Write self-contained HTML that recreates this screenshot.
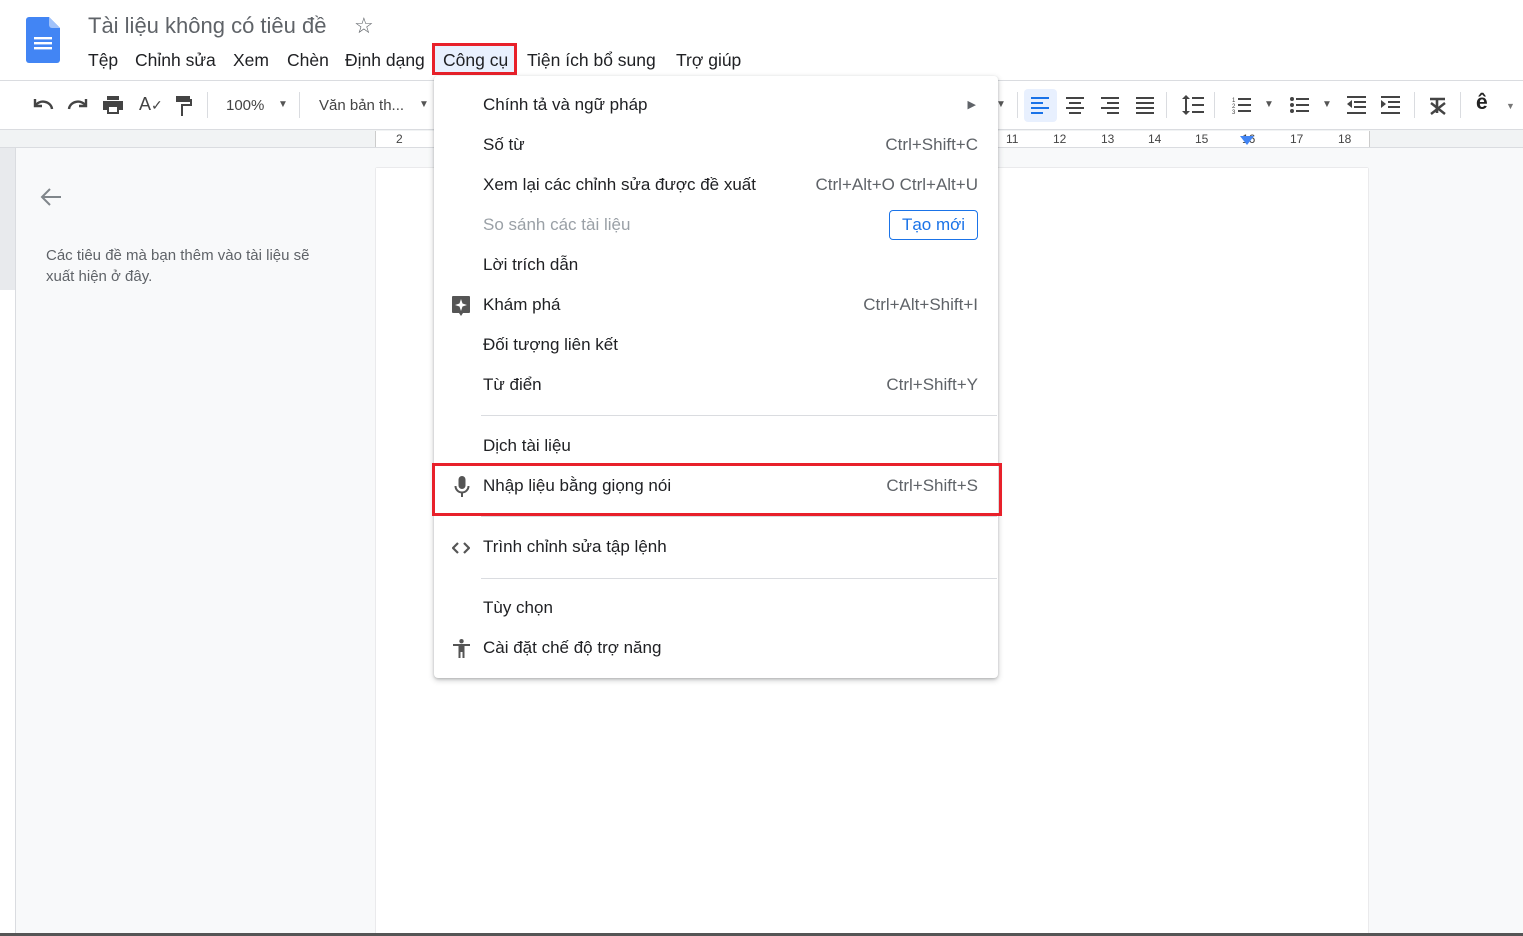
<!DOCTYPE html>
<html><head><meta charset="utf-8"><style>
*{margin:0;padding:0;box-sizing:border-box}
body{width:1523px;height:936px;overflow:hidden;background:#f8f9fa;font-family:"Liberation Sans",Arial,sans-serif;position:relative;color:#202124}
.a{position:absolute}
.hdr{left:0;top:0;width:1523px;height:81px;background:#fff;border-bottom:1px solid #dadce0}
.tb{left:0;top:81px;width:1523px;height:49px;background:#fff;border-bottom:1px solid #dadce0}
.ruler{left:0;top:130px;width:1523px;height:18px;background:#f1f3f4;border-bottom:1px solid #dadce0}
.mi{position:absolute;left:0;width:564px;height:40px;font-size:17px;line-height:40px}
.mi .t{position:absolute;left:49px}
.mi .s{position:absolute;right:20px;color:#5f6368}
.sep{position:absolute;left:47px;width:516px;height:1px;background:#dadce0}
.menu{left:434px;top:76px;width:564px;height:602px;background:#fff;border-radius:4px;box-shadow:0 2px 6px rgba(60,64,67,.3),0 1px 2px rgba(60,64,67,.2)}
.mn{position:absolute;top:50px;font-size:17.5px}
.ic{position:absolute;fill:#444}
.rn{position:absolute;top:132px;font-size:12px;color:#444}
</style></head><body>
<div class="a hdr"></div>
<svg class="a" style="left:26px;top:17px" width="34" height="46" viewBox="0 0 34 46"><path d="M3 0h20l11 11v32a3 3 0 0 1-3 3H3a3 3 0 0 1-3-3V3a3 3 0 0 1 3-3z" fill="#4285f4"/><path d="M23 0l11 11H26a3 3 0 0 1-3-3z" fill="#a1c2fa"/><rect x="8" y="20" width="18" height="2.4" fill="#fff"/><rect x="8" y="25" width="18" height="2.4" fill="#fff"/><rect x="8" y="30" width="18" height="2.4" fill="#fff"/></svg>
<div class="a" style="left:88px;top:13px;font-size:22px;color:#5f6368">Tài liệu không có tiêu đề</div>
<div class="a" style="left:354px;top:13px;font-size:22px;color:#5f6368">☆</div>
<div class="mn" style="left:88px">Tệp</div>
<div class="mn" style="left:135px">Chỉnh sửa</div>
<div class="mn" style="left:233px">Xem</div>
<div class="mn" style="left:287px">Chèn</div>
<div class="mn" style="left:345px">Định dạng</div>
<div class="a" style="left:432px;top:43px;width:85px;height:32px;border:3px solid #e8202a;background:#e8f0fe"></div>
<div class="mn" style="left:443px">Công cụ</div>
<div class="mn" style="left:527px">Tiện ích bổ sung</div>
<div class="mn" style="left:676px">Trợ giúp</div>

<div class="a tb"></div>
<svg class="a" style="left:32px;top:97px" width="22" height="14"><path d="M3 2v7h7" stroke="#444" stroke-width="2.4" fill="none"/><path d="M3 9a9 8 0 0 1 17 3" stroke="#444" stroke-width="2.4" fill="none"/></svg>
<svg class="a" style="left:67px;top:97px" width="22" height="14"><path d="M19 2v7h-7" stroke="#444" stroke-width="2.4" fill="none"/><path d="M19 9a9 8 0 0 0-17 3" stroke="#444" stroke-width="2.4" fill="none"/></svg>
<svg class="a ic" style="left:103px;top:96px" width="20" height="18"><path d="M4 0h12v4H4zM0 5h20v9h-4v4H4v-4H0z"/><rect x="6" y="11" width="8" height="5" fill="#fff"/></svg>
<div class="a" style="left:139px;top:94px;font-size:18px;color:#444">A<span style="font-size:14px">✓</span></div>
<svg class="a ic" style="left:176px;top:96px" width="16" height="20"><path d="M0 0h14v3h2v7H7v10H5V8h9V5h-0v1H0z"/></svg>
<div class="a" style="left:207px;top:92px;width:1px;height:26px;background:#dadce0"></div>
<div class="a" style="left:226px;top:97px;font-size:15px;color:#444">100%</div>
<div class="a" style="left:278px;top:99px;font-size:10px;color:#555">▼</div>
<div class="a" style="left:299px;top:92px;width:1px;height:26px;background:#dadce0"></div>
<div class="a" style="left:319px;top:97px;font-size:15px;color:#444">Văn bản th...</div>
<div class="a" style="left:419px;top:99px;font-size:10px;color:#555">▼</div>
<div class="a" style="left:996px;top:99px;font-size:10px;color:#555">▼</div>
<div class="a" style="left:1017px;top:92px;width:1px;height:26px;background:#dadce0"></div>
<div class="a" style="left:1024px;top:89px;width:33px;height:33px;background:#e8f0fe;border-radius:4px"></div>
<svg class="a" style="left:1031px;top:97px" width="18" height="17"><path d="M0 0h18v2H0zM0 5h12v2H0zM0 10h18v2H0zM0 15h12v2H0z" fill="#1a73e8"/></svg>
<svg class="a ic" style="left:1066px;top:97px" width="18" height="17"><path d="M0 0h18v2H0zM3 5h12v2H3zM0 10h18v2H0zM3 15h12v2H3z"/></svg>
<svg class="a ic" style="left:1101px;top:97px" width="18" height="17"><path d="M0 0h18v2H0zM6 5h12v2H6zM0 10h18v2H0zM6 15h12v2H6z"/></svg>
<svg class="a ic" style="left:1136px;top:97px" width="18" height="17"><path d="M0 0h18v2H0zM0 5h18v2H0zM0 10h18v2H0zM0 15h18v2H0z"/></svg>
<div class="a" style="left:1166px;top:92px;width:1px;height:26px;background:#dadce0"></div>
<svg class="a ic" style="left:1182px;top:95px" width="22" height="20"><path d="M4 0l4 4H5v12h3l-4 4-4-4h3V4H0zM10 2h12v2H10zM10 9h12v2H10zM10 16h12v2H10z"/></svg>
<div class="a" style="left:1214px;top:92px;width:1px;height:26px;background:#dadce0"></div>
<svg class="a ic" style="left:1232px;top:96px" width="20" height="18"><text x="0" y="6" font-size="6">1</text><text x="0" y="12" font-size="6">2</text><text x="0" y="18" font-size="6">3</text><path d="M6 2h13v2H6zM6 8h13v2H6zM6 14h13v2H6z"/></svg>
<div class="a" style="left:1264px;top:99px;font-size:10px;color:#555">▼</div>
<svg class="a ic" style="left:1290px;top:96px" width="20" height="18"><circle cx="2" cy="3" r="2"/><circle cx="2" cy="9" r="2"/><circle cx="2" cy="15" r="2"/><path d="M6 2h13v2H6zM6 8h13v2H6zM6 14h13v2H6z"/></svg>
<div class="a" style="left:1322px;top:99px;font-size:10px;color:#555">▼</div>
<svg class="a ic" style="left:1347px;top:96px" width="19" height="18"><path d="M0 0h19v2H0zM7 5h12v2H7zM7 10h12v2H7zM0 16h19v2H0zM5 4v8L0 8z"/></svg>
<svg class="a ic" style="left:1381px;top:96px" width="19" height="18"><path d="M0 0h19v2H0zM7 5h12v2H7zM7 10h12v2H7zM0 16h19v2H0zM0 4v8l5-4z"/></svg>
<div class="a" style="left:1414px;top:92px;width:1px;height:26px;background:#dadce0"></div>
<svg class="a" style="left:1428px;top:97px" width="20" height="18"><path d="M2 2h15M9 2v14" stroke="#444" stroke-width="2.6" fill="none"/><path d="M3 6l14 11M17 6L3 17" stroke="#444" stroke-width="2.4"/></svg>
<div class="a" style="left:1460px;top:92px;width:1px;height:26px;background:#dadce0"></div>
<div class="a" style="left:1476px;top:91px;font-size:21px;font-weight:bold;color:#222">ê</div>
<div class="a" style="left:1506px;top:101px;font-size:9px;color:#777">▼</div>

<div class="a ruler"></div>
<div class="a" style="left:375px;top:131px;width:995px;height:16px;background:#fff;border-left:1px solid #ccc;border-right:1px solid #ccc"></div>
<div class="rn" style="left:396px">2</div>
<div class="rn" style="left:1006px">11</div>
<div class="rn" style="left:1053px">12</div>
<div class="rn" style="left:1101px">13</div>
<div class="rn" style="left:1148px">14</div>
<div class="rn" style="left:1195px">15</div>
<div class="rn" style="left:1242px">16</div>
<div class="rn" style="left:1290px">17</div>
<div class="rn" style="left:1338px">18</div>
<div class="a" style="left:1240px;top:136px;width:0;height:0;border-left:7px solid transparent;border-right:7px solid transparent;border-top:9px solid #4285f4"></div>

<div class="a" style="left:0;top:148px;width:16px;height:788px;background:#fff;border-right:1px solid #dadce0"></div>
<div class="a" style="left:0;top:148px;width:15px;height:142px;background:#e8eaed"></div>
<div class="a" style="left:376px;top:168px;width:992px;height:768px;background:#fff;box-shadow:0 0 1px rgba(0,0,0,.3)"></div>
<svg class="a" style="left:40px;top:187px" width="22" height="20"><path d="M21 10H3M10 2l-8 8 8 8" stroke="#80868b" stroke-width="2" fill="none"/></svg>
<div class="a" style="left:46px;top:245px;font-size:15px;color:#5f6368;line-height:21px;width:290px">Các tiêu đề mà bạn thêm vào tài liệu sẽ xuất hiện ở đây.</div>
<div class="a" style="left:0;top:933px;width:1523px;height:3px;background:#555"></div>

<div class="a menu">
<div class="mi" style="top:9px"><span class="t">Chính tả và ngữ pháp</span><span class="s" style="font-size:11px;right:22px">▶</span></div>
<div class="mi" style="top:49px"><span class="t">Số từ</span><span class="s">Ctrl+Shift+C</span></div>
<div class="mi" style="top:89px"><span class="t">Xem lại các chỉnh sửa được đề xuất</span><span class="s">Ctrl+Alt+O Ctrl+Alt+U</span></div>
<div class="mi" style="top:129px"><span class="t" style="color:#9aa0a6">So sánh các tài liệu</span></div>
<div class="a" style="left:455px;top:134px;width:89px;height:30px;border:1px solid #1a73e8;border-radius:4px;color:#1a73e8;font-size:17px;line-height:28px;text-align:center">Tạo mới</div>
<div class="mi" style="top:169px"><span class="t">Lời trích dẫn</span></div>
<div class="mi" style="top:209px"><svg style="position:absolute;left:18px;top:11px" width="18" height="20"><path d="M1 0h16a1 1 0 0 1 1 1v15a1 1 0 0 1-1 1H11l-2 3-2-3H1a1 1 0 0 1-1-1V1a1 1 0 0 1 1-1z" fill="#555"/><path d="M9 3l1.5 4.5L15 9l-4.5 1.5L9 15l-1.5-4.5L3 9l4.5-1.5z" fill="#fff"/></svg><span class="t">Khám phá</span><span class="s">Ctrl+Alt+Shift+I</span></div>
<div class="mi" style="top:249px"><span class="t">Đối tượng liên kết</span></div>
<div class="mi" style="top:289px"><span class="t">Từ điển</span><span class="s">Ctrl+Shift+Y</span></div>
<div class="sep" style="top:339px"></div>
<div class="mi" style="top:350px"><span class="t">Dịch tài liệu</span></div>
<div class="mi" style="top:390px"><svg style="position:absolute;left:20px;top:10px" width="16" height="22"><rect x="4.5" y="0" width="7" height="13" rx="3.5" fill="#555"/><path d="M1.5 10a6.5 6.5 0 0 0 13 0" stroke="#555" stroke-width="2" fill="none"/><rect x="7" y="16" width="2" height="5" fill="#555"/></svg><span class="t">Nhập liệu bằng giọng nói</span><span class="s">Ctrl+Shift+S</span></div>
<div class="sep" style="top:440px"></div>
<div class="mi" style="top:451px"><svg style="position:absolute;left:18px;top:15px" width="18" height="12"><path d="M6 1L1 6l5 5M12 1l5 5-5 5" stroke="#555" stroke-width="2.2" fill="none"/></svg><span class="t">Trình chỉnh sửa tập lệnh</span></div>
<div class="sep" style="top:502px"></div>
<div class="mi" style="top:512px"><span class="t">Tùy chọn</span></div>
<div class="mi" style="top:552px"><svg style="position:absolute;left:19px;top:11px" width="17" height="19"><circle cx="8.5" cy="2.2" r="2.2" fill="#555"/><path d="M0 5h17v2h-5.5v12h-2v-6h-2v6h-2V7H0z" fill="#555"/></svg><span class="t">Cài đặt chế độ trợ năng</span></div>
</div>
<div class="a" style="left:432px;top:463px;width:570px;height:53px;border:3px solid #e8202a"></div>
</body></html>
